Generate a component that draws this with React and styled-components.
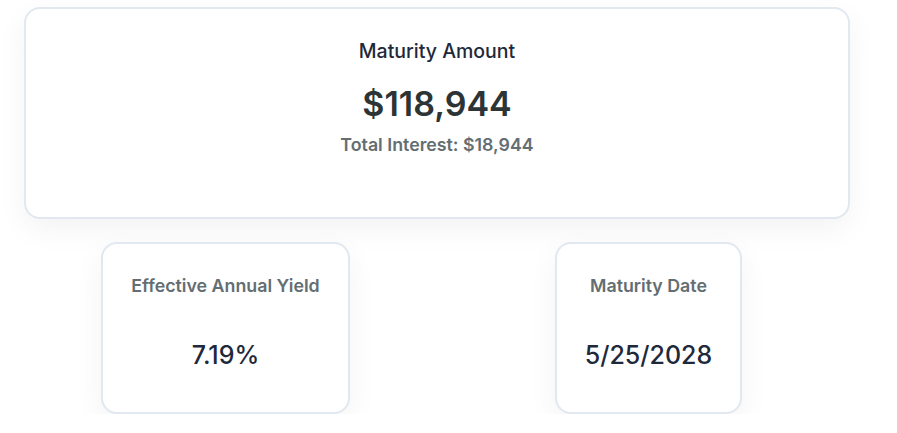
import React from 'react'
import styled, { createGlobalStyle } from 'styled-components'

const GlobalStyle = createGlobalStyle`
  html, body {
    margin: 0;
    padding: 0;
    background: #ffffff;
  }
  body {
    font-family: Inter, "Noto Sans", sans-serif;
  }
`

const Page = styled.div`
  width: 826px;
  padding: 7px 0 0 24px;
  display: flex;
  flex-direction: column;
  gap: 23px;
`

const MainCard = styled.div`
  height: 212px;
  box-sizing: border-box;
  background: #ffffff;
  border: 2px solid #e2e8f0;
  border-radius: 16px;
  box-shadow: 0px 10px 30px rgba(0, 0, 0, 0.05);
  padding: 30px 24px;
  display: flex;
  flex-direction: column;
  align-items: center;
`

const MainTitle = styled.div`
  font-size: 19.5px;
  font-weight: 500;
  line-height: 24px;
  color: #1e293b;
`

const MainValue = styled.div`
  margin-top: 20px;
  font-size: 34px;
  font-weight: 600;
  line-height: 42px;
  color: #2d3436;
`

const SubValue = styled.div`
  margin-top: 8px;
  font-size: 17.8px;
  font-weight: 600;
  line-height: 24px;
  color: #636e72;
`

const StatRow = styled.div`
  display: grid;
  grid-template-columns: 1fr 1fr;
  column-gap: 20px;
`

const StatCard = styled.div`
  justify-self: center;
  height: 172px;
  box-sizing: border-box;
  background: #ffffff;
  border: 2px solid #e2e8f0;
  border-radius: 16px;
  box-shadow: 0px 10px 30px rgba(0, 0, 0, 0.05);
  padding: 30px 28px;
  display: flex;
  flex-direction: column;
  align-items: center;
`

const StatLabel = styled.div`
  font-size: 17.8px;
  font-weight: 600;
  line-height: 24px;
  color: #636e72;
  white-space: nowrap;
`

const StatValue = styled.div`
  margin-top: 42px;
  font-size: 25px;
  font-weight: 500;
  line-height: 30px;
  color: #1e293b;
  white-space: nowrap;
`

const stats = [
  { label: 'Effective Annual Yield', value: '7.19%' },
  { label: 'Maturity Date', value: '5/25/2028' },
]

const App = () => {
  return (
    <>
      <GlobalStyle />
      <Page>
        <MainCard>
          <MainTitle>Maturity Amount</MainTitle>
          <MainValue>$118,944</MainValue>
          <SubValue>Total Interest: $18,944</SubValue>
        </MainCard>
        <StatRow>
          {stats.map((s) => (
            <StatCard key={s.label}>
              <StatLabel>{s.label}</StatLabel>
              <StatValue>{s.value}</StatValue>
            </StatCard>
          ))}
        </StatRow>
      </Page>
    </>
  )
}

export default App
